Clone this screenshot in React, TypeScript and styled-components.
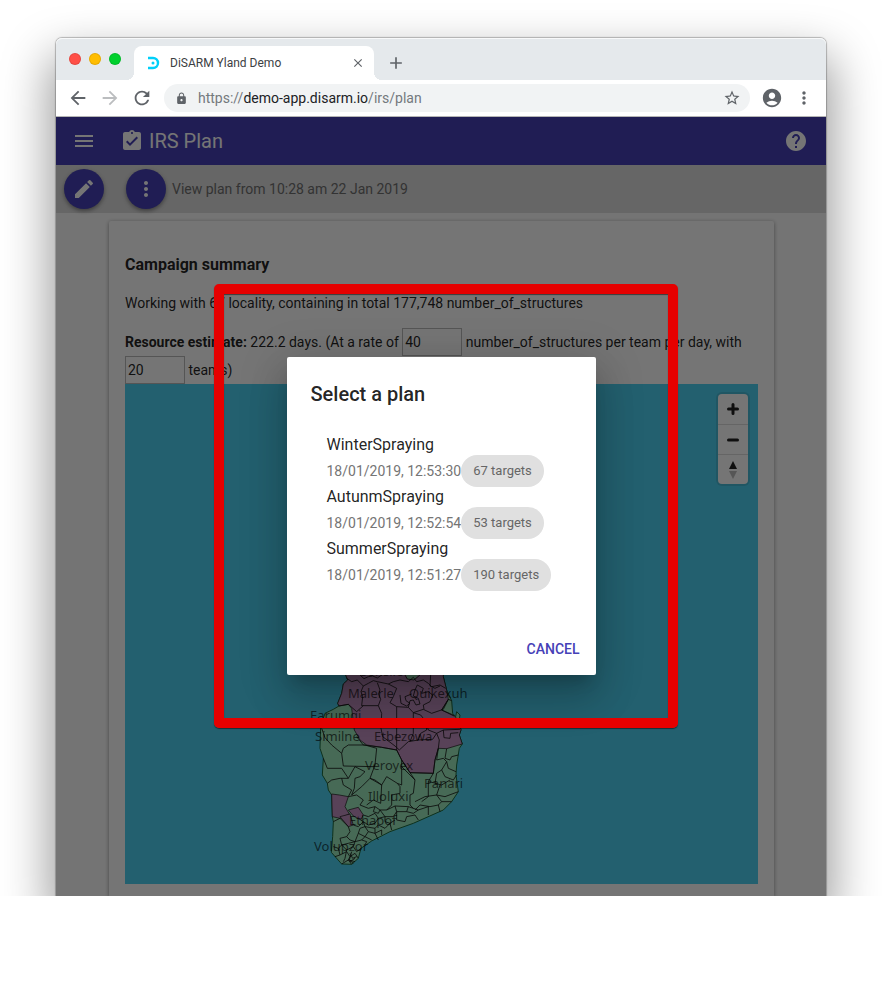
import React from 'react';
import styled, { createGlobalStyle } from 'styled-components';
import {
  MdAccountCircle,
  MdAdd,
  MdArrowBack,
  MdArrowForward,
  MdAssignmentTurnedIn,
  MdClose,
  MdEdit,
  MdHelp,
  MdLock,
  MdMenu,
  MdMoreVert,
  MdRefresh,
  MdStarBorder,
} from 'react-icons/md';

const GlobalStyle = createGlobalStyle`
  *, *::before, *::after { box-sizing: border-box; }
  body {
    margin: 0;
    background: #fff;
    font-family: Roboto, "Liberation Sans", sans-serif;
    font-size: 14px;
    line-height: 20px;
    color: rgba(0, 0, 0, 0.87);
  }
  button, input { font: inherit; color: inherit; }
  button { border: 0; padding: 0; background: none; cursor: pointer; }
  h1, h2, p, ul { margin: 0; padding: 0; }
`;

const Stage = styled.div`
  position: relative;
  overflow: hidden;
  padding: 38px 56px 0;
`;

const BrowserWindow = styled.div`
  position: relative;
  border-radius: 6px 6px 0 0;
  box-shadow: 0 0 1px 1px rgba(0, 0, 0, 0.25), 0 24px 48px 6px rgba(0, 0, 0, 0.4);
`;

/* Browser chrome */

const TabStrip = styled.div`
  display: flex;
  align-items: center;
  height: 42px;
  padding: 8px 12px 0 13px;
  border-radius: 6px 6px 0 0;
  background: #e5e9ec;
  box-shadow: inset 0 1px 0 #f8f9fa;
`;

const WindowControls = styled.div`
  display: flex;
  gap: 8px;
  width: 65px;
  height: 26px;
`;

const Light = styled.button<{ $color: string }>`
  width: 12px;
  height: 12px;
  margin-top: 3px;
  border-radius: 50%;
  background: ${(p) => p.$color};
  box-shadow: inset 0 0 0 1px rgba(0, 0, 0, 0.1);
`;

const Tab = styled.div`
  position: relative;
  display: flex;
  align-items: center;
  width: 240px;
  height: 34px;
  padding: 0 8px 0 12px;
  border-radius: 8px 8px 0 0;
  background: #fff;

  &::before, &::after {
    content: '';
    position: absolute;
    bottom: 0;
    width: 8px;
    height: 8px;
  }
  &::before {
    right: 100%;
    background: radial-gradient(circle at 0 0, transparent 8px, #fff 8px);
  }
  &::after {
    left: 100%;
    background: radial-gradient(circle at 100% 0, transparent 8px, #fff 8px);
  }
`;

const TabTitle = styled.span`
  flex: 1;
  padding-left: 10px;
  font-size: 12px;
  color: #3c4043;
`;

const ChromeButton = styled.button<{ $size?: number; $faded?: boolean }>`
  display: grid;
  place-items: center;
  width: ${(p) => p.$size ?? 32}px;
  height: ${(p) => p.$size ?? 32}px;
  color: ${(p) => (p.$faded ? '#bbbdbf' : '#5f6368')};
`;

const NewTab = styled(ChromeButton)`
  margin-left: 10px;
`;

const Toolbar = styled.div`
  display: flex;
  align-items: center;
  height: 37px;
  padding: 0 6px;
  border-bottom: 1px solid #b5b5b5;
  background: #fff;
`;

const AddressBar = styled.div`
  display: flex;
  flex: 1;
  align-items: center;
  height: 28px;
  margin: 0 6px;
  padding: 0 6px 0 11px;
  border-radius: 14px;
  background: #f1f3f4;
  color: #5f6368;
`;

const Url = styled.span`
  flex: 1;
  padding-left: 10px;
  color: #74797d;
`;

const Host = styled.span`
  color: #202124;
`;

/* Application page */

const Viewport = styled.div`
  position: relative;
  background: #fdfdfd;
`;

const AppBar = styled.header`
  display: flex;
  align-items: center;
  height: 48px;
  padding: 0 18px 0 16px;
  background: #4641b7;
  color: #fff;
`;

const BarButton = styled.button`
  display: grid;
  place-items: center;
  width: 24px;
  height: 24px;
`;

const AppTitle = styled.h1`
  display: flex;
  flex: 1;
  align-items: center;
  gap: 5px;
  margin-left: 24px;
  font-size: 20px;
  font-weight: 400;
  line-height: 26px;
`;

const PlanBar = styled.div`
  display: flex;
  align-items: center;
  height: 48px;
  padding: 0 8px;
  background: #dedede;
  color: #707070;
`;

const RoundButton = styled.button`
  display: grid;
  place-items: center;
  width: 40px;
  height: 40px;
  margin-right: 22px;
  border-radius: 50%;
  background: #4641b7;
  color: #fff;
  box-shadow: 0 2px 4px rgba(0, 0, 0, 0.4);

  & + & { margin-right: 6px; }
`;

const Card = styled.main`
  margin: 8px 52px 0 53px;
  padding: 32px 16px 12px;
  border-radius: 2px 2px 0 0;
  background: #fefefe;
  box-shadow: 0 1px 4px rgba(0, 0, 0, 0.4);
`;

const PageContent = styled.div`
  overflow: hidden;
`;

const CardTitle = styled.h2`
  font-size: 16px;
  font-weight: 700;
  line-height: 24px;
`;

const Summary = styled.p`
  margin: 16px 0 15px;
`;

const Estimate = styled.p`
  line-height: 28px;
`;

const NumberInput = styled.input`
  width: 60px;
  height: 28px;
  padding: 0 2px;
  border: 1px solid #b9b9b9;
  background: transparent;
  vertical-align: top;
`;

const MapPanel = styled.section`
  position: relative;
  height: 500px;
  overflow: hidden;
  background: #4ed1f1;
`;

const MapDrawing = styled.svg`
  display: block;
  width: 100%;
  height: 100%;
`;

const MapControls = styled.div`
  position: absolute;
  top: 10px;
  right: 10px;
  width: 30px;
  border-radius: 4px;
  background: #fff;
  box-shadow: 0 0 0 2px rgba(0, 0, 0, 0.1);
`;

const MapButton = styled.button`
  display: grid;
  place-items: center;
  width: 30px;
  height: 30px;

  & + & { border-top: 1px solid #ddd; }
`;

/* Dialog */

const Scrim = styled.div`
  position: absolute;
  inset: 0;
  display: flex;
  align-items: flex-start;
  justify-content: center;
  padding-top: 240px;
  background: rgba(0, 0, 0, 0.54);
`;

const Highlight = styled.div`
  position: absolute;
  top: 167px;
  right: 148px;
  left: 158px;
  height: 444px;
  border: 10px solid #e60000;
  border-radius: 5px;
  box-shadow: 0 1px 1px rgba(0, 0, 0, 0.5), inset 0 1px 1px rgba(0, 0, 0, 0.5);
  pointer-events: none;
`;

const Dialog = styled.div`
  width: 309px;
  max-width: 90%;
  padding: 24px 8px 8px;
  border-radius: 2px;
  background: #fff;
  box-shadow: 0 11px 15px -7px rgba(0, 0, 0, 0.2), 0 24px 38px 3px rgba(0, 0, 0, 0.14),
    0 9px 46px 8px rgba(0, 0, 0, 0.12);
`;

const DialogTitle = styled.h2`
  padding-left: 16px;
  font-size: 20px;
  font-weight: 500;
  line-height: 26px;
`;

const PlanList = styled.ul`
  margin: 28px 32px 40px;
  list-style: none;
`;

const PlanItem = styled.button`
  display: block;
  width: 100%;
  text-align: left;
`;

const PlanName = styled.span`
  display: block;
  font-size: 16px;
`;

const PlanMeta = styled.span`
  display: flex;
  align-items: center;
  height: 32px;
  color: #757575;
  white-space: nowrap;
`;

const Chip = styled.span`
  padding: 0 12px;
  border-radius: 16px;
  background: #e0e0e0;
  color: #666;
  font-size: 13px;
  line-height: 32px;
`;

const DialogActions = styled.div`
  display: flex;
  justify-content: flex-end;
`;

const TextButton = styled.button`
  height: 36px;
  padding: 0 8px;
  color: #4641b7;
  font-weight: 500;
`;

const plans = [
  { name: 'WinterSpraying', date: '18/01/2019, 12:53:30', targets: 67 },
  { name: 'AutunmSpraying', date: '18/01/2019, 12:52:54', targets: 53 },
  { name: 'SummerSpraying', date: '18/01/2019, 12:51:27', targets: 190 },
];

const places = [
  { name: 'Sonsile', x: 235, y: 292 },
  { name: 'Malerle', x: 223, y: 314 },
  { name: 'Quikexuh', x: 284, y: 314 },
  { name: 'Earumgi', x: 185, y: 336 },
  { name: 'Similne', x: 190, y: 357 },
  { name: 'Etbezowa', x: 249, y: 357 },
  { name: 'Veroyex', x: 240, y: 386 },
  { name: 'Panari', x: 299, y: 404 },
  { name: 'Illoluxi', x: 243, y: 417 },
  { name: 'Ethapof', x: 224, y: 441 },
  { name: 'Volupzor', x: 189, y: 467 },
];

const island =
  'M130-40L137 15 143 30 130 42 125 70 113 100 117 108 100 118 75 130 62 170 60 235 70 265 67 315 82 340 85 360 95 375 97 440 100 455 98 500 94 547 125 582 155 583 175 565 183 535 215 513 270 485 340 460 430 420 455 395 475 365 468 315 470 285 478 235 487 222 478 195 483 180 478 150 480 135 470 125 467 140 458 130 455 92 440 60 430 20 432-40Z';

const targeted = [
  'M130-40L137 15 143 30 130 42 125 70 113 100 117 108 145 103 155 115 163 180 180 210 200 225 245 232 290 240 305 270 330 308 400 310 405 270 415 235 440 236 487 222 478 195 483 180 475 150 460 135 425 120 445 88 440 60 430 20 432-40Z',
  'M95 372L118 375 145 380 135 410 148 432 120 445 97 440Z',
  'M145 420L175 412 190 435 182 450 160 438Z',
  'M120 440L150 432 160 465 145 470Z',
];

const borders = [
  'M140 25L155 35 172 30 190 48 205 40 220 32 232 35 265 42 280 35 300 30 325 35 340 22 350 35 370 30 385 40 395 50 420 45 437 55',
  'M180 15L192 26 205 20 218 18 232 24 245 15',
  'M315 15L322 27 342 30 360 15',
  'M392 15L390 48 405 55 420 48',
  'M190 48L183 65 188 80 185 107 235 107 242 88 236 72 240 60 232 38',
  'M117 108L145 103 170 125 190 107',
  'M235 107L245 130 243 175 248 200 285 228 298 240',
  'M290 110L290 240M340 128L340 190 330 215',
  'M265 42L290 55 280 80 270 98 290 110 325 112 330 92 340 90 348 105 360 102 355 85 340 78 345 60 352 45 370 55 365 70 385 65 398 75 390 95 370 105 372 118',
  'M300 75L303 100 320 108 330 100 318 92 315 80 335 72',
  'M325 112L340 128 370 118 395 130 430 118 445 88',
  'M340 128L362 135 378 155 385 180 410 190 430 180 480 178',
  'M425 120L445 88 455 92M425 120L462 138',
  'M298 240L325 215 355 210 398 208 410 190',
  'M410 190L418 210 415 235',
  'M430 180L432 203 450 205 452 190 475 188',
  'M355 210L362 190 380 180 378 155',
  'M65 175L75 203 95 225 125 250 130 235 145 225 195 225 230 235 225 285 222 290 130 288 125 250',
  'M170 200L190 225 245 232 290 240 305 270 330 308 400 310 405 270 415 235',
  'M70 265L82 295 125 295 145 325 165 290 195 305 180 320 165 325 163 355 155 375 185 350 210 325 245 345 242 400 220 390 200 405',
  'M82 340L95 330 120 325 145 325M125 325L130 345 155 360 145 380',
  'M225 285L210 325 225 330 245 345 260 320 292 340 300 350 300 370 275 375 275 405 260 420',
  'M305 270L305 345 292 340M330 308L345 330 340 370 330 375 330 405 340 415',
  'M345 330L305 290M400 310L385 335 385 380 365 395',
  'M415 235L410 270 430 265 440 275 425 300 435 320 460 330 470 315',
  'M440 236L435 265 450 270 455 260 475 255M425 300L410 310 405 340 425 345 450 330',
  'M440 275L445 295 468 305M385 335L410 340M420 345L410 375 435 380 475 365',
  'M345 395L375 380 410 375 425 395 415 405 390 410 360 405 345 420M425 395L455 395',
  'M145 380L170 375 190 390 180 405 205 415 225 410 240 420 260 420 285 408 325 410',
  'M225 410L220 425 235 430 240 420 255 440 280 440 290 425 320 425 325 410 355 420 385 410 385 435M415 405L420 425',
  'M285 408L290 425 290 450 315 455 320 440 345 435 355 450M320 425L340 430 355 420',
  'M190 435L205 440 225 430 235 445 225 460 205 465 190 455 182 450M235 445L255 440 255 455 270 460 285 450',
  'M160 465L175 470 190 455 195 470 180 475 175 490 195 500 205 485 195 470 225 475 235 465 255 475 270 460 275 480',
  'M205 485L225 490 235 510M225 475L225 490 245 480 245 495M185 510L200 515 195 525M175 490L165 515 185 510 195 500 215 510',
  'M100 455L120 445 145 470 150 485 140 500 120 505 125 525 145 520 165 515 160 530 170 545 183 535',
  'M140 500L150 510 165 515M125 525L115 535 100 530M115 535L120 555 105 560M125 525L140 540 160 530',
  'M120 555L140 545 150 560 145 570 125 582M140 540L135 565 130 575M150 560L165 550 175 565M155 583L145 570 165 575M155 545L148 570 160 580M150 550L158 565 170 560M150 575L165 565',
];

function Favicon() {
  return (
    <svg width="14" height="14" viewBox="0 0 14 14" aria-hidden="true">
      <path d="M2 2h5a5 5 0 0 1 0 10H2" fill="none" stroke="#00d0fa" strokeWidth="2.4" />
      <circle cx="7" cy="7" r="1.5" fill="#00d0fa" />
    </svg>
  );
}

function DistrictMap() {
  return (
    <MapPanel aria-label="District map">
      <MapDrawing viewBox="0 0 633 500" preserveAspectRatio="xMidYMid slice">
        <g transform="translate(175 286) scale(0.3333)">
          <path d={island} fill="#9ce6bb" stroke="#1d6b3c" strokeWidth="3" />
          {targeted.map((d) => (
            <path key={d} d={d} fill="#c190bf" stroke="#111" strokeWidth="2" />
          ))}
          <path d="M315 5L322 27 342 30 362 5Z" fill="#9ce6bb" />
          {borders.map((d) => (
            <path key={d} d={d} fill="none" stroke="#111" strokeWidth="2.4" strokeLinejoin="round" />
          ))}
        </g>
        <g fill="#000" fillOpacity="0.65" fontFamily="'Noto Sans', 'Open Sans', sans-serif" fontSize="13">
          {places.map((p) => (
            <text key={p.name} x={p.x} y={p.y}>
              {p.name}
            </text>
          ))}
        </g>
      </MapDrawing>
      <MapControls>
        <MapButton aria-label="Zoom in">
          <svg width="14" height="14" viewBox="0 0 14 14">
            <path d="M7 2.5v9M2.5 7h9" stroke="#222" strokeWidth="3" strokeLinecap="round" />
          </svg>
        </MapButton>
        <MapButton aria-label="Zoom out">
          <svg width="14" height="14" viewBox="0 0 14 14">
            <path d="M2.5 7h9" stroke="#222" strokeWidth="3" strokeLinecap="round" />
          </svg>
        </MapButton>
        <MapButton aria-label="Reset north">
          <svg width="10" height="18" viewBox="0 0 10 18">
            <path d="M5 0l4 8H1z" fill="#222" />
            <path d="M5 18l4-8H1z" fill="#bbb" />
          </svg>
        </MapButton>
      </MapControls>
    </MapPanel>
  );
}

function BrowserChrome() {
  return (
    <>
      <TabStrip>
        <WindowControls>
          <Light $color="#ff4f47" aria-label="Close window" />
          <Light $color="#ffbd00" aria-label="Minimise window" />
          <Light $color="#00d02d" aria-label="Zoom window" />
        </WindowControls>
        <Tab>
          <Favicon />
          <TabTitle>DiSARM Yland Demo</TabTitle>
          <ChromeButton $size={16} aria-label="Close tab">
            <MdClose size={14} />
          </ChromeButton>
        </Tab>
        <NewTab $size={24} aria-label="New tab">
          <MdAdd size={20} />
        </NewTab>
      </TabStrip>
      <Toolbar>
        <ChromeButton aria-label="Back">
          <MdArrowBack size={22} />
        </ChromeButton>
        <ChromeButton $faded aria-label="Forward">
          <MdArrowForward size={22} />
        </ChromeButton>
        <ChromeButton aria-label="Reload">
          <MdRefresh size={22} />
        </ChromeButton>
        <AddressBar>
          <MdLock size={13} />
          <Url>
            https://<Host>demo-app.disarm.io</Host>/irs/plan
          </Url>
          <ChromeButton $size={24} aria-label="Bookmark">
            <MdStarBorder size={18} />
          </ChromeButton>
        </AddressBar>
        <ChromeButton aria-label="Profile">
          <MdAccountCircle size={22} />
        </ChromeButton>
        <ChromeButton aria-label="Browser menu">
          <MdMoreVert size={20} />
        </ChromeButton>
      </Toolbar>
    </>
  );
}

function PlanDialog() {
  return (
    <Dialog role="dialog" aria-modal="true" aria-labelledby="dialog-title">
      <DialogTitle id="dialog-title">Select a plan</DialogTitle>
      <PlanList>
        {plans.map((plan) => (
          <li key={plan.name}>
            <PlanItem>
              <PlanName>{plan.name}</PlanName>
              <PlanMeta>
                {plan.date}
                <Chip>{plan.targets} targets</Chip>
              </PlanMeta>
            </PlanItem>
          </li>
        ))}
      </PlanList>
      <DialogActions>
        <TextButton>CANCEL</TextButton>
      </DialogActions>
    </Dialog>
  );
}

export default function App() {
  return (
    <>
      <GlobalStyle />
      <Stage>
        <BrowserWindow>
          <BrowserChrome />
          <Viewport>
            <AppBar>
              <BarButton aria-label="Menu">
                <MdMenu size={24} />
              </BarButton>
              <AppTitle>
                <MdAssignmentTurnedIn size={24} />
                IRS Plan
              </AppTitle>
              <BarButton aria-label="Help">
                <MdHelp size={24} />
              </BarButton>
            </AppBar>
            <PlanBar>
              <RoundButton aria-label="Edit plan">
                <MdEdit size={24} />
              </RoundButton>
              <RoundButton aria-label="Plan options">
                <MdMoreVert size={24} />
              </RoundButton>
              View plan from 10:28 am 22 Jan 2019
            </PlanBar>
            <PageContent>
              <Card>
                <CardTitle>Campaign summary</CardTitle>
                <Summary>
                  Working with 67 locality, containing in total 177,748 number_of_structures
                </Summary>
                <Estimate>
                  <strong>Resource estimate:</strong> 222.2 days. (At a rate of{' '}
                  <NumberInput defaultValue="40" aria-label="Structures per team per day" />{' '}
                  number_of_structures per team per day, with{' '}
                  <NumberInput defaultValue="20" aria-label="Number of teams" /> teams)
                </Estimate>
                <DistrictMap />
              </Card>
            </PageContent>
            <Scrim>
              <Highlight />
              <PlanDialog />
            </Scrim>
          </Viewport>
        </BrowserWindow>
      </Stage>
    </>
  );
}
